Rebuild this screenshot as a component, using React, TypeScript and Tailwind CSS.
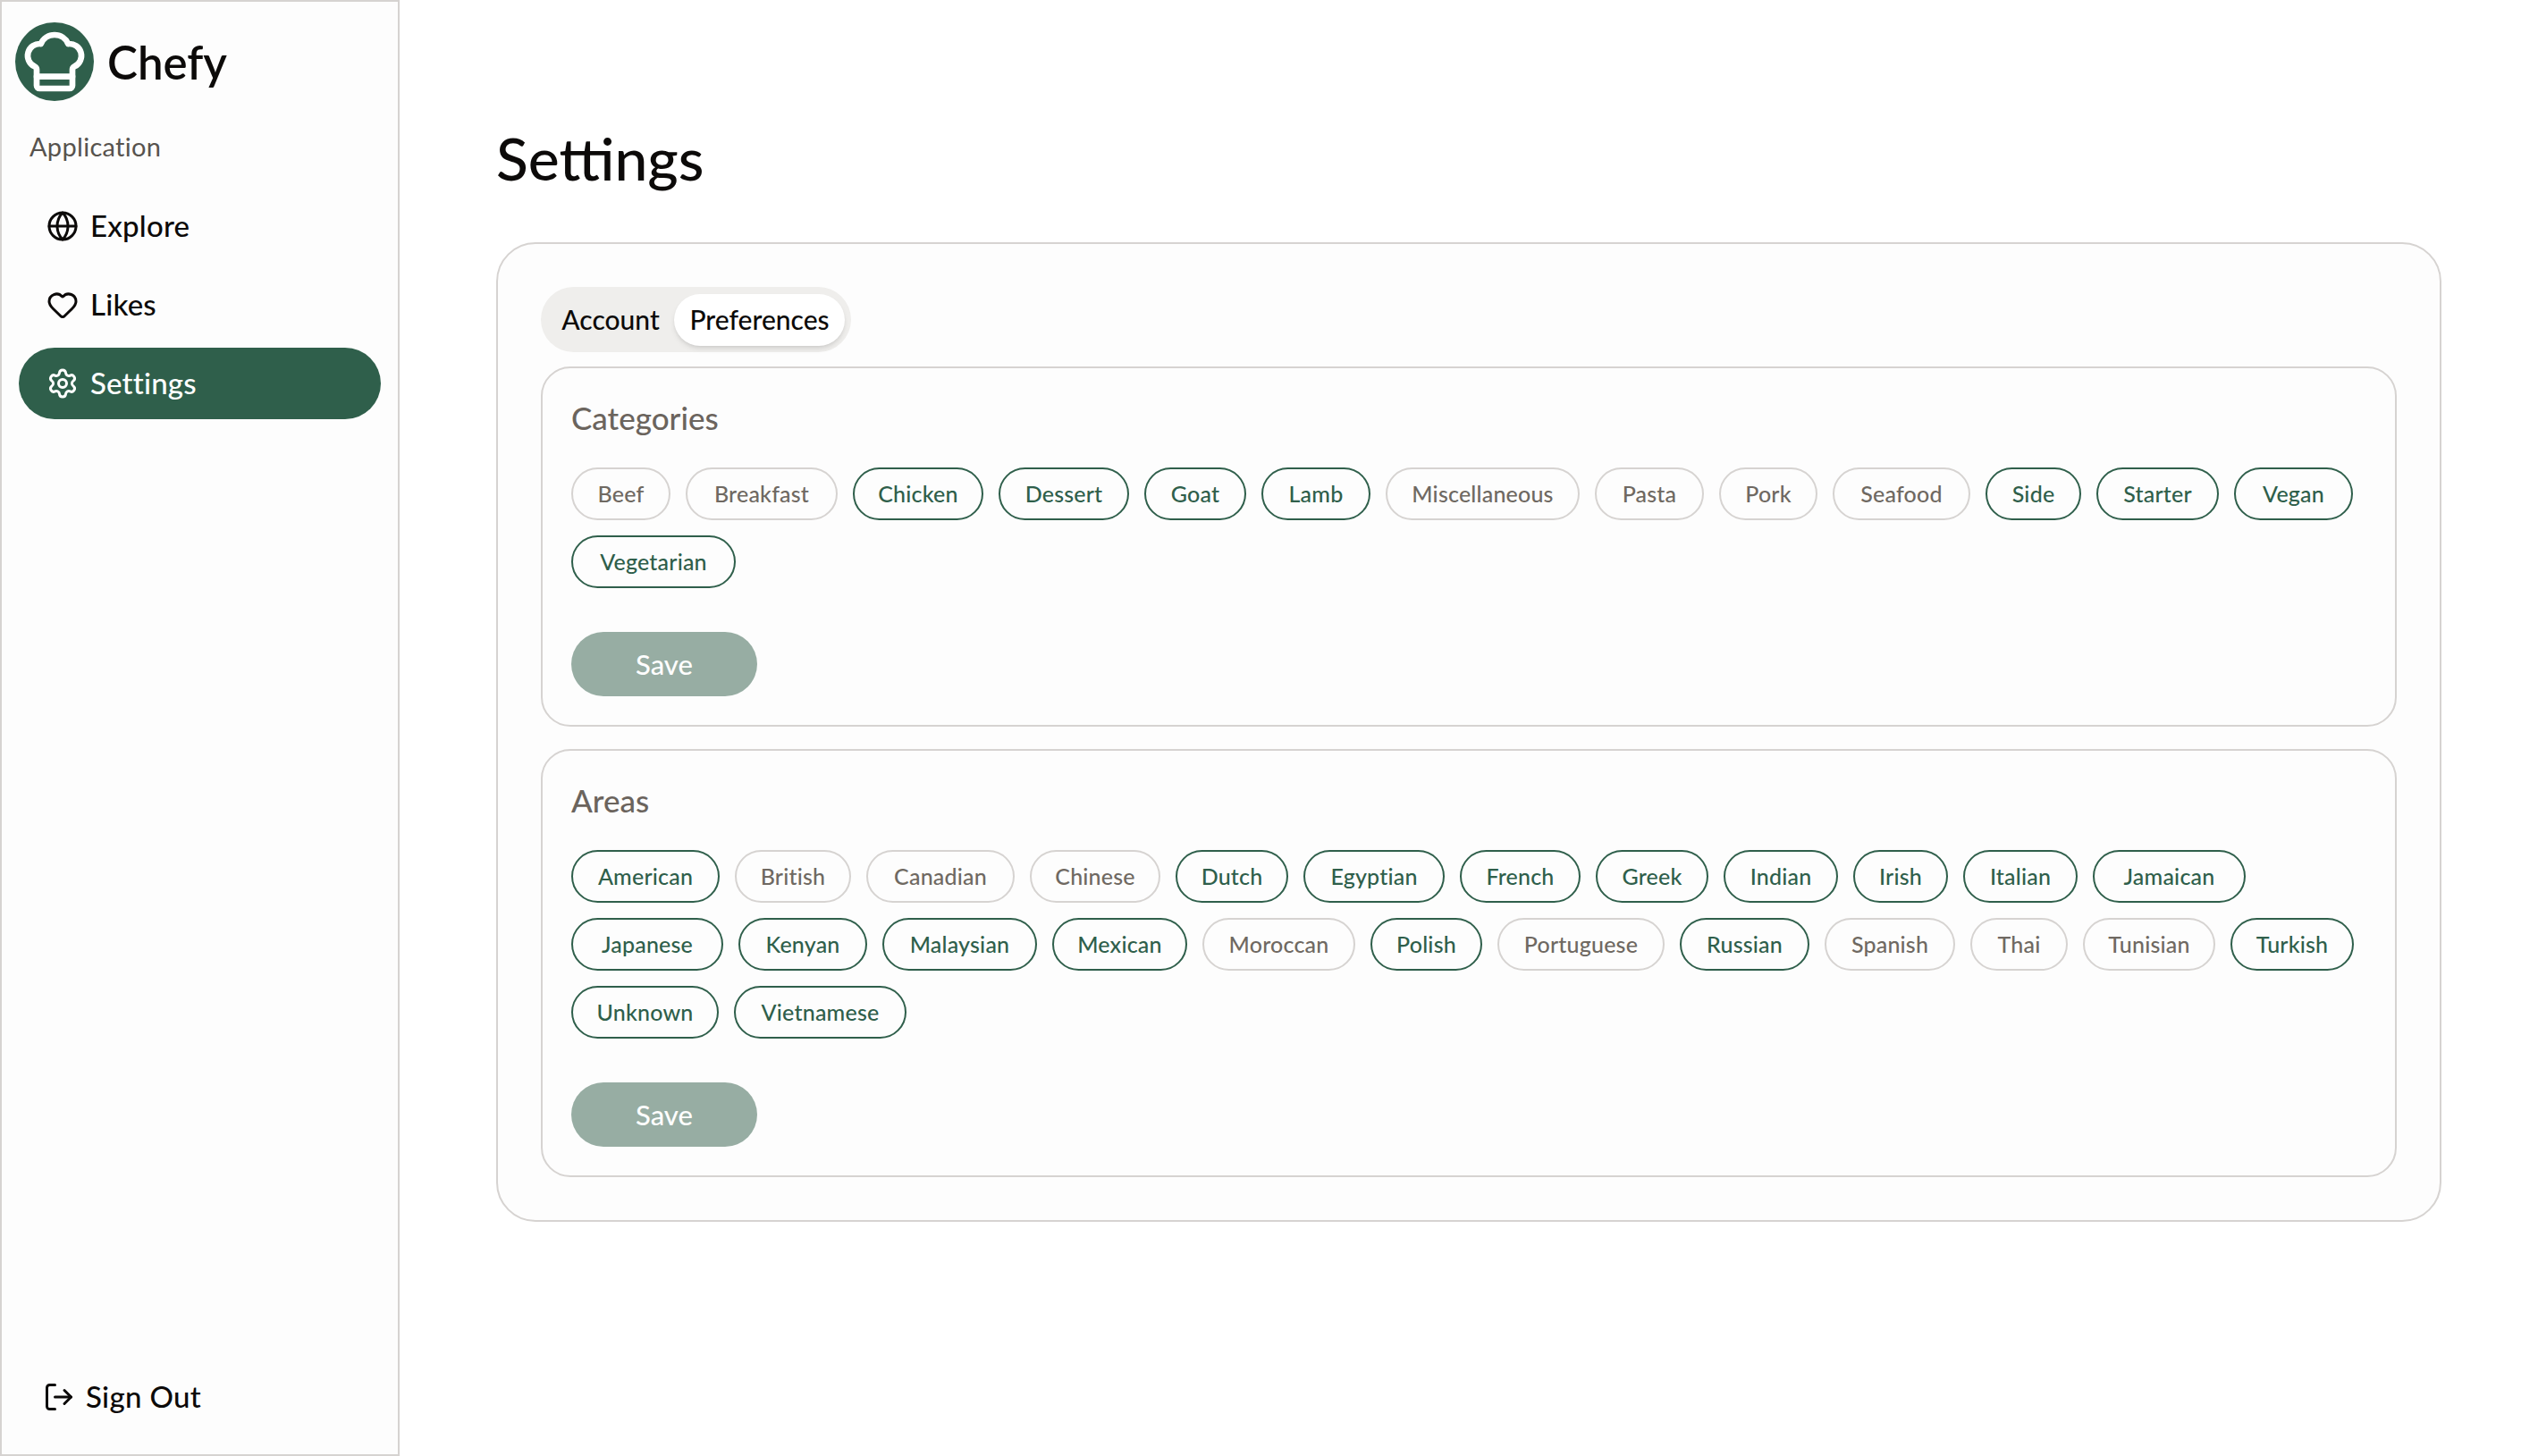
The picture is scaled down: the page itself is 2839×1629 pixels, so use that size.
import React from 'react';
import { ChefHat, Globe, Heart, LogOut, Settings } from 'lucide-react';

type Chip = { label: string; on: boolean; w: string };

const categories: Chip[] = [
  { label: 'Beef', on: false, w: 'w-[111px]' },
  { label: 'Breakfast', on: false, w: 'w-[170px]' },
  { label: 'Chicken', on: true, w: 'w-[146px]' },
  { label: 'Dessert', on: true, w: 'w-[146px]' },
  { label: 'Goat', on: true, w: 'w-[114px]' },
  { label: 'Lamb', on: true, w: 'w-[122px]' },
  { label: 'Miscellaneous', on: false, w: 'w-[217px]' },
  { label: 'Pasta', on: false, w: 'w-[122px]' },
  { label: 'Pork', on: false, w: 'w-[110px]' },
  { label: 'Seafood', on: false, w: 'w-[154px]' },
  { label: 'Side', on: true, w: 'w-[107px]' },
  { label: 'Starter', on: true, w: 'w-[137px]' },
  { label: 'Vegan', on: true, w: 'w-[133px]' },
  { label: 'Vegetarian', on: true, w: 'w-[184px]' },
];

const areas: Chip[] = [
  { label: 'American', on: true, w: 'w-[166px]' },
  { label: 'British', on: false, w: 'w-[130px]' },
  { label: 'Canadian', on: false, w: 'w-[166px]' },
  { label: 'Chinese', on: false, w: 'w-[146px]' },
  { label: 'Dutch', on: true, w: 'w-[126px]' },
  { label: 'Egyptian', on: true, w: 'w-[158px]' },
  { label: 'French', on: true, w: 'w-[135px]' },
  { label: 'Greek', on: true, w: 'w-[126px]' },
  { label: 'Indian', on: true, w: 'w-[128px]' },
  { label: 'Irish', on: true, w: 'w-[106px]' },
  { label: 'Italian', on: true, w: 'w-[128px]' },
  { label: 'Jamaican', on: true, w: 'w-[171px]' },
  { label: 'Japanese', on: true, w: 'w-[170px]' },
  { label: 'Kenyan', on: true, w: 'w-[144px]' },
  { label: 'Malaysian', on: true, w: 'w-[173px]' },
  { label: 'Mexican', on: true, w: 'w-[151px]' },
  { label: 'Moroccan', on: false, w: 'w-[171px]' },
  { label: 'Polish', on: true, w: 'w-[125px]' },
  { label: 'Portuguese', on: false, w: 'w-[187px]' },
  { label: 'Russian', on: true, w: 'w-[145px]' },
  { label: 'Spanish', on: false, w: 'w-[146px]' },
  { label: 'Thai', on: false, w: 'w-[109px]' },
  { label: 'Tunisian', on: false, w: 'w-[148px]' },
  { label: 'Turkish', on: true, w: 'w-[138px]' },
  { label: 'Unknown', on: true, w: 'w-[165px]' },
  { label: 'Vietnamese', on: true, w: 'w-[193px]' },
];

const PrefCard = ({ title, chips }: { title: string; chips: Chip[] }) => (
  <section className="rounded-[33px] border-2 border-[#d6d3d1] bg-[#fdfdfd] pt-[35px] pb-[32px] px-[32px]">
    <h2 className="text-[35px] leading-[40px] font-medium text-[#6b645d]">{title}</h2>
    <div className="mt-[36px] flex flex-wrap gap-[17px]">
      {chips.map((c) => (
        <span
          key={c.label}
          className={`${c.w} h-[59px] flex items-center justify-center rounded-full border-2 text-[25px] font-medium tracking-[0.2px] ${
            c.on ? 'border-[#2f5f4b] text-[#2f5f4b]' : 'border-[#d6d3d1] text-[#6f6962]'
          }`}
        >
          {c.label}
        </span>
      ))}
    </div>
    <button className="mt-[49px] block w-[208px] h-[72px] rounded-full bg-[#97ada3] text-[31px] font-medium text-[#fdfdfd]">
      Save
    </button>
  </section>
);

export default function App() {
  return (
    <div className="h-screen flex bg-white text-[#0c0a09] font-['Lato','Noto_Sans',sans-serif]">
      <aside className="w-[447px] shrink-0 border-2 border-[#d6d3d1] bg-[#fdfdfd] flex flex-col pt-[23px] pb-[34px]">
        <div className="flex items-center gap-[15px] pl-[15px]">
          <div className="w-[88px] h-[88px] rounded-full bg-[#2f5f4b] flex items-center justify-center">
            <ChefHat size={80} strokeWidth={2} className="text-white" />
          </div>
          <span className="text-[51px] font-semibold leading-none">Chefy</span>
        </div>
        <p className="mt-[31px] pl-[31px] text-[29px] leading-[40px] tracking-[0.3px] text-[#57534e]">Application</p>
        <nav className="mt-[29px] px-[19px] flex flex-col gap-[8px]">
          <a className="h-[80px] rounded-full flex items-center gap-[13px] pl-[31px] text-[33px] font-medium tracking-[0.2px]">
            <Globe size={36} strokeWidth={2} />
            Explore
          </a>
          <a className="h-[80px] rounded-full flex items-center gap-[13px] pl-[31px] text-[33px] font-medium tracking-[0.2px]">
            <Heart size={36} strokeWidth={2} />
            Likes
          </a>
          <a className="h-[80px] rounded-full flex items-center gap-[13px] pl-[31px] text-[33px] font-medium tracking-[0.2px] bg-[#2f5f4b] text-white">
            <Settings size={36} strokeWidth={2} />
            Settings
          </a>
        </nav>
        <a className="mt-auto h-[60px] flex items-center gap-[12px] pl-[46px] text-[33px] font-medium tracking-[0.3px]">
          <LogOut size={36} strokeWidth={2} />
          Sign Out
        </a>
      </aside>
      <main className="flex-1 px-[108px] pt-[132px]">
        <h1 className="text-[66px] leading-[90px] font-medium">Settings</h1>
        <div className="mt-[49px] rounded-[44px] border-2 border-[#d6d3d1] bg-[#fdfdfd] px-[48px] pt-[48px] pb-[48px]">
          <div className="w-[347px] h-[73px] rounded-full bg-[#efeeec] flex items-center pl-[7px] pr-[7px]">
            <span className="w-[142px] text-center text-[30px] font-medium">Account</span>
            <span className="w-[191px] h-[58px] rounded-full bg-white shadow-md flex items-center justify-center text-[30px] font-medium">
              Preferences
            </span>
          </div>
          <div className="mt-[16px] flex flex-col gap-[25px]">
            <PrefCard title="Categories" chips={categories} />
            <PrefCard title="Areas" chips={areas} />
          </div>
        </div>
      </main>
    </div>
  );
}
